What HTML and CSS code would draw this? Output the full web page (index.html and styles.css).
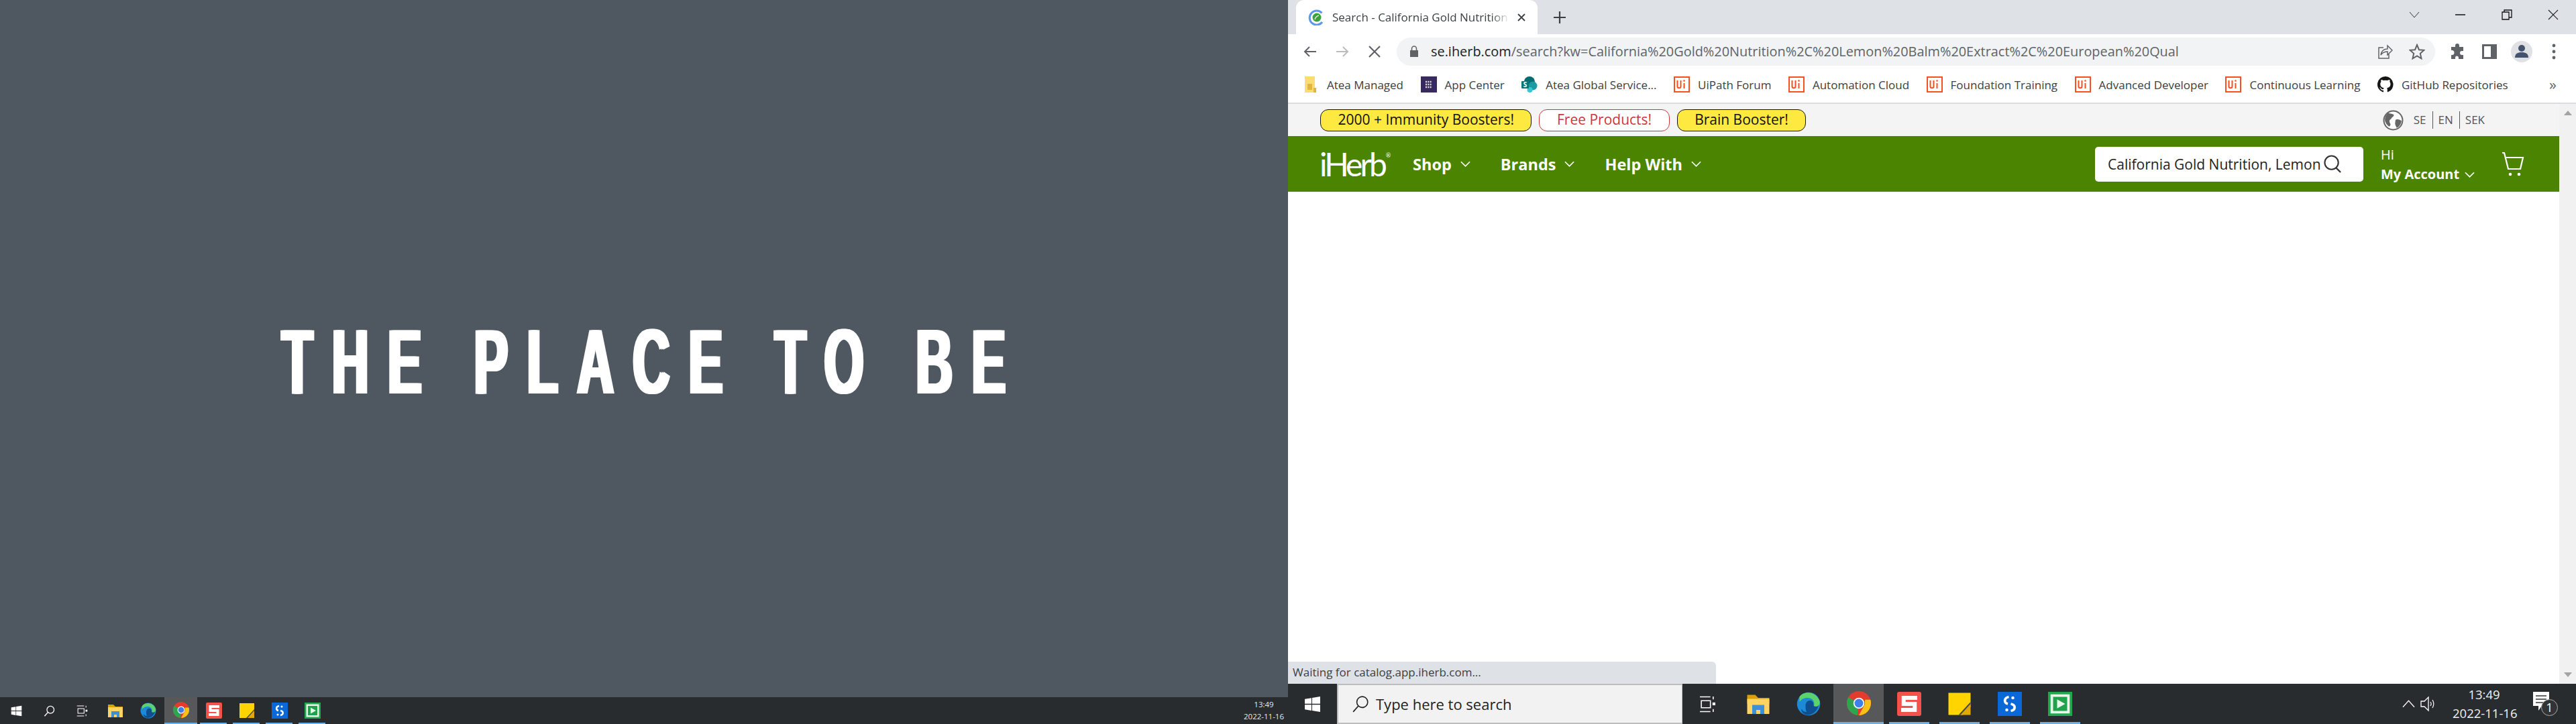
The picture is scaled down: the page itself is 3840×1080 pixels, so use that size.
FILE: index.html
```html
<!DOCTYPE html>
<html lang="en">
<head>
    <meta charset="UTF-8">
    <title>The Place To Be</title>
    <link rel="stylesheet" href="styles.css">
</head>
<body>
    <!-- shared icons -->
    <svg class="sprite" xmlns="http://www.w3.org/2000/svg">
        <symbol id="i-win" viewBox="0 0 24 24"><path fill="#fff" d="M1 4.500 10.500 3v8.300H1zM11.500 2.800 23 1v10.300H11.500zM1 12.700h9.500V21L1 19.500zM11.500 12.700H23V23l-11.500-1.800z"/></symbol>
        <symbol id="i-lens" viewBox="0 0 24 24"><circle cx="14.500" cy="9.500" r="7.500" fill="none" stroke="#fff" stroke-width="1.800"/><path d="M9 15 2 23" stroke="#fff" stroke-width="2" fill="none"/></symbol>
        <symbol id="i-view" viewBox="0 0 24 24"><path fill="none" stroke="#fff" stroke-width="1.500" d="M1 1.500h15M1 22.500h15M3 7h13v10H3zM20 1v4M20 19v4"/><rect x="19" y="9.500" width="4" height="4" fill="#fff"/></symbol>
        <symbol id="i-folder" viewBox="0 0 24 24"><path fill="#d9a000" d="M1 3h8l3 3h11v6H1z"/><path fill="#ffd465" d="M1 7h22v15H1z"/><path fill="#3f8fd6" d="M6 22v-9h12v9h-4v-4h-4v4z"/></symbol>
        <symbol id="i-edge" viewBox="0 0 24 24"><circle cx="12" cy="12" r="11.500" fill="#1c8ad6"/><path fill="#5bd26b" d="M3 5C7-1 19-1 23 9c1 5-3 7-6 6 2-5-1-9-6-9-3 0-6 1-8 4z" /><path fill="#0f4f8f" d="M9 14c0-4 3-6 6-5 2 1 2 3 2 5 2 1 4 1 5-1-1 6-6 10-11 10-3 0-7-3-6-6 1 2 3 3 5 3-1-2-1-4-1-6z"/></symbol>
        <symbol id="i-chrome" viewBox="0 0 24 24"><circle cx="12" cy="12" r="12" fill="#e33b2e"/><path fill="#2fa44f" d="M12 24C5.400 24 0 18.600 0 12c0-2.200.6-4.200 1.600-6L12 12l-1.500 12z"/><path fill="#fbc116" d="M23.500 8.500C24 10 24 11 24 12c0 6.600-5.400 12-12 12l6-11V8.500z"/><circle cx="12" cy="12" r="5.500" fill="#fff"/><circle cx="12" cy="12" r="4.300" fill="#3f7fe8"/></symbol>
        <symbol id="i-snag" viewBox="0 0 24 24"><rect width="24" height="24" rx="2" fill="#f4524d"/><path fill="none" stroke="#fff" stroke-width="4" d="M20 6H6.500v6h11v6H4"/></symbol>
        <symbol id="i-sticky" viewBox="0 0 24 24"><path fill="#ffd400" d="M1 1h22v14l-8 8H1z"/><path fill="#4a4a44" d="M23 10v4l-9 9h-3z"/><path fill="#e2a900" d="M23 12v11H13z"/></symbol>
        <symbol id="i-blue" viewBox="0 0 24 24"><rect width="24" height="24" fill="#0a68d8"/><path fill="none" stroke="#fff" stroke-width="2.500" d="M11 5C6 6 6 11 10 12M13 12c5 1 5 6 0 7"/><circle cx="15" cy="6" r="1.500" fill="#fff"/><circle cx="9" cy="18" r="1.500" fill="#fff"/></symbol>
        <symbol id="i-green" viewBox="0 0 24 24"><rect width="24" height="24" fill="#21a84f"/><rect x="2.500" y="2.500" width="19" height="19" fill="#e8f6ec"/><rect x="5" y="5" width="14" height="14" fill="#1fa24b"/><path fill="#e8f6ec" d="M9 7.500 17 12l-8 4.500z"/></symbol>
        <symbol id="i-ui" viewBox="0 0 24 24"><rect x="1" y="1" width="22" height="22" fill="#fff" stroke="#f4511e" stroke-width="2"/><path fill="none" stroke="#f4511e" stroke-width="2" d="M5.500 6v9c0 3 5 3 5 0V6M15.500 10v8"/><circle cx="15.500" cy="6.500" r="1.300" fill="#f4511e"/></symbol>
    </svg>

    <div class="screen screen-left">
        <div class="wallpaper">
            <h1 class="slogan"><span>THE PLACE TO BE</span></h1>
        </div>
        <div class="taskbar taskbar-small">
            <div class="task"><svg class="ico-t"><use href="#i-win"/></svg></div>
            <div class="task"><svg class="ico-t"><use href="#i-lens"/></svg></div>
            <div class="task"><svg class="ico-t"><use href="#i-view"/></svg></div>
            <div class="task"><svg class="ico-s"><use href="#i-folder"/></svg></div>
            <div class="task"><svg class="ico-s"><use href="#i-edge"/></svg></div>
            <div class="task task-active"><svg class="ico-s"><use href="#i-chrome"/></svg></div>
            <div class="task task-open"><svg class="ico-s"><use href="#i-snag"/></svg></div>
            <div class="task task-open"><svg class="ico-s"><use href="#i-sticky"/></svg></div>
            <div class="task task-open"><svg class="ico-s"><use href="#i-blue"/></svg></div>
            <div class="task task-open"><svg class="ico-s"><use href="#i-green"/></svg></div>
            <div class="clock-small">
                <div>13:49</div>
                <div>2022-11-16</div>
            </div>
        </div>
    </div>

    <div class="screen screen-right">
        <div class="browser">
            <div class="tabstrip">
                <div class="tab">
                    <svg class="favicon" viewBox="0 0 24 24"><path d="M20.500 5.500A10.500 10.500 0 1 0 21 19" fill="none" stroke="#5b97ec" stroke-width="3"/><circle cx="13" cy="12" r="6.500" fill="#3ea23a"/><path d="M10 15c1-4 3-5 6-6" stroke="#fff" stroke-width="1.300" fill="none"/></svg>
                    <span class="tab-title">Search - California Gold Nutrition</span>
                    <svg class="tab-x" viewBox="0 0 12 12"><path d="M1 1l10 10M11 1 1 11" stroke="#3c4043" stroke-width="1.800"/></svg>
                </div>
                <svg class="newtab" viewBox="0 0 18 18"><path d="M9 0v18M0 9h18" stroke="#3c4043" stroke-width="2.200"/></svg>
                <div class="winctl">
                    <div class="winbtn"><svg viewBox="0 0 16 10" width="16" height="10"><path d="M1 1l7 8 7-8" fill="none" stroke="#333" stroke-width="1"/></svg></div>
                    <div class="winbtn"><svg viewBox="0 0 16 16" width="16" height="16"><path d="M0 8h15" stroke="#111" stroke-width="1.500"/></svg></div>
                    <div class="winbtn"><svg viewBox="0 0 16 16" width="16" height="16"><path d="M1 4h10v11H1zM4 4V1h11v11h-4" fill="none" stroke="#111" stroke-width="1.300"/></svg></div>
                    <div class="winbtn"><svg viewBox="0 0 16 16" width="16" height="16"><path d="M1 1l14 14M15 1 1 15" stroke="#222" stroke-width="1.200"/></svg></div>
                </div>
            </div>

            <div class="toolbar">
                <div class="toolbtn"><svg viewBox="0 0 20 20" width="20" height="20"><path d="M19 10H2M9 3 2 10l7 7" fill="none" stroke="#5f6368" stroke-width="2"/></svg></div>
                <div class="toolbtn"><svg viewBox="0 0 20 20" width="20" height="20"><path d="M1 10h17M11 3l7 7-7 7" fill="none" stroke="#b9bcc0" stroke-width="2"/></svg></div>
                <div class="toolbtn"><svg viewBox="0 0 18 18" width="18" height="18"><path d="M1 1l16 16M17 1 1 17" stroke="#5f6368" stroke-width="2.200"/></svg></div>
                <div class="omnibox">
                    <svg class="lock" viewBox="0 0 14 18"><path d="M1 7h12v10H1z" fill="#5f6368"/><path d="M3.500 7V4.500a3.500 3.500 0 0 1 7 0V7" fill="none" stroke="#5f6368" stroke-width="1.600"/></svg>
                    <div class="url"><span class="url-host">se.iherb.com</span>/search?kw=California%20Gold%20Nutrition%2C%20Lemon%20Balm%20Extract%2C%20European%20Qual</div>
                    <div class="toolbtn"><svg viewBox="0 0 24 24" width="24" height="24"><path d="M10 6H3v16h15v-6M6 17c1-6 5-9 10-9V3l7 7-7 7v-5c-4 0-7 1-10 5z" fill="none" stroke="#5f6368" stroke-width="1.500"/></svg></div>
                    <div class="toolbtn"><svg viewBox="0 0 24 24" width="24" height="24"><path d="m12 2 3 7.200 7.500.6-5.700 5 1.700 7.500L12 18.300l-6.500 4 1.700-7.500-5.700-5L9 9.200z" fill="none" stroke="#5f6368" stroke-width="2"/></svg></div>
                </div>
                <div class="toolright">
                    <div class="toolbtn"><svg viewBox="0 0 24 24" width="24" height="24"><path fill="#5f6368" d="M9 3a3 3 0 0 1 6 0v2h6v6h-2a3 3 0 0 0 0 6h2v6h-7v-2a2.500 2.500 0 0 0-5 0v2H3v-6h1a3.500 3.500 0 0 0 0-7H3V5h6z"/></svg></div>
                    <div class="toolbtn"><svg viewBox="0 0 22 22" width="22" height="22"><path fill="#5f6368" fill-rule="evenodd" d="M0 0h22v22H0zM3 3v16h10V3z"/></svg></div>
                    <div class="toolbtn"><svg viewBox="0 0 32 32" width="32" height="32"><circle cx="16" cy="16" r="16" fill="#dfe1e5"/><circle cx="16" cy="11" r="5" fill="#44546f"/><path d="M6 25c0-6 4-8 10-8s10 2 10 8z" fill="#44546f"/></svg></div>
                    <div class="toolbtn"><svg viewBox="0 0 6 24" width="6" height="24"><circle cx="3" cy="3" r="2.400" fill="#5f6368"/><circle cx="3" cy="12" r="2.400" fill="#5f6368"/><circle cx="3" cy="21" r="2.400" fill="#5f6368"/></svg></div>
                </div>
            </div>

            <div class="bookmarks">
                <div class="bm"><svg class="bm-ico" viewBox="0 0 24 24"><path d="M3 0h15v24H3z" fill="#fbdb73"/><path d="M7 11h7v9H7z" fill="#e0b73c"/><path d="M16 17h4v7h-4z" fill="#e0b73c"/></svg>Atea Managed</div>
                <div class="bm"><svg class="bm-ico" viewBox="0 0 24 24"><rect width="24" height="24" fill="#38295f"/><path d="M7 8h10M7 12h10M7 16h10" stroke="#ddd" stroke-width="2.500" stroke-dasharray="2 1.300"/></svg>App Center</div>
                <div class="bm"><svg class="bm-ico" viewBox="0 0 24 24"><circle cx="12" cy="8" r="8" fill="#036c70"/><circle cx="17" cy="14" r="6.500" fill="#1a9ba1"/><circle cx="12.500" cy="20" r="4" fill="#37c6d0"/><rect y="7" width="11" height="11" rx="1" fill="#03787c"/><text x="5.500" y="16" class="sp-s">S</text></svg>Atea Global Service...</div>
                <div class="bm"><svg class="bm-ico"><use href="#i-ui"/></svg>UiPath Forum</div>
                <div class="bm"><svg class="bm-ico"><use href="#i-ui"/></svg>Automation Cloud</div>
                <div class="bm"><svg class="bm-ico"><use href="#i-ui"/></svg>Foundation Training</div>
                <div class="bm"><svg class="bm-ico"><use href="#i-ui"/></svg>Advanced Developer</div>
                <div class="bm"><svg class="bm-ico"><use href="#i-ui"/></svg>Continuous Learning</div>
                <div class="bm"><svg class="bm-ico" viewBox="0 0 24 24"><path fill="#161614" d="M12 0a12 12 0 0 0-3.800 23.400c.6.100.8-.3.800-.6v-2.100c-3.300.7-4-1.600-4-1.600-.6-1.400-1.400-1.800-1.400-1.800-1.100-.7.100-.7.100-.7 1.200.1 1.800 1.200 1.800 1.200 1.100 1.800 2.800 1.300 3.500 1 .1-.8.400-1.300.8-1.600-2.700-.3-5.500-1.300-5.500-5.900 0-1.300.5-2.400 1.200-3.200-.1-.3-.5-1.500.1-3.200 0 0 1-.3 3.300 1.200a11.500 11.500 0 0 1 6 0c2.300-1.500 3.300-1.200 3.300-1.200.6 1.700.2 2.900.1 3.200.8.800 1.200 1.900 1.200 3.200 0 4.600-2.800 5.600-5.500 5.900.4.400.8 1.100.8 2.200v3.300c0 .3.200.7.800.6A12 12 0 0 0 12 0z"/></svg>GitHub Repositories</div>
                <div class="bm-more">»</div>
            </div>

            <div class="page">
                <div class="page-main">
                    <div class="promo">
                        <div class="pill">2000 + Immunity Boosters!</div>
                        <div class="pill pill-white">Free Products!</div>
                        <div class="pill">Brain Booster!</div>
                        <div class="locale">
                            <svg class="globe" viewBox="0 0 30 30"><circle cx="15" cy="15" r="13.500" fill="#fff" stroke="#666" stroke-width="2"/><path fill="#666" d="M8 4c3 2 6 1 8 3 0 3-3 3-4 6-3 1-3 4-1 7 0 2 0 3-2 4-3-2-6-6-6-10 0-4 2-8 5-10zM19 14c3-1 6 0 8 2-1 5-4 9-7 10-1-3-3-5-2-8 0-2 0-3 1-4z"/></svg>
                            <span class="loc">SE</span><span class="loc loc-sep">EN</span><span class="loc loc-sep">SEK</span>
                        </div>
                    </div>
                    <div class="site-head">
                        <div class="logo">iHerb<sup>®</sup></div>
                        <div class="nav">
                            <div class="nav-item">Shop<svg class="chev" viewBox="0 0 16 10"><path d="M1 1l7 7 7-7" fill="none" stroke="#fff" stroke-width="1.800"/></svg></div>
                            <div class="nav-item">Brands<svg class="chev" viewBox="0 0 16 10"><path d="M1 1l7 7 7-7" fill="none" stroke="#fff" stroke-width="1.800"/></svg></div>
                            <div class="nav-item">Help With<svg class="chev" viewBox="0 0 16 10"><path d="M1 1l7 7 7-7" fill="none" stroke="#fff" stroke-width="1.800"/></svg></div>
                        </div>
                        <div class="search">
                            <div class="search-text">California Gold Nutrition, Lemon</div>
                            <svg class="search-ico" viewBox="0 0 28 28"><circle cx="12" cy="12" r="10.500" fill="none" stroke="#333" stroke-width="2.200"/><path d="M19 20l7 7" stroke="#333" stroke-width="2.400"/></svg>
                        </div>
                        <div class="account">
                            <div>Hi</div>
                            <div class="account-name">My Account<svg class="chev chev-acc" viewBox="0 0 16 10"><path d="M1 1l7 7 7-7" fill="none" stroke="#fff" stroke-width="1.800"/></svg></div>
                        </div>
                        <svg class="cart" viewBox="0 0 34 36"><path d="M1 1h3l6 24h18l4-17H7" fill="none" stroke="#fff" stroke-width="2.200"/><circle cx="13" cy="33" r="2.300" fill="#fff"/><circle cx="26" cy="33" r="2.300" fill="#fff"/></svg>
                    </div>
                    <div class="content"></div>
                    <div class="status">Waiting for catalog.app.iherb.com...</div>
                </div>
                <div class="scrollbar">
                    <div class="arrow-up"></div>
                    <div class="arrow-down"></div>
                </div>
            </div>
        </div>

        <div class="taskbar taskbar-big">
            <div class="start"><svg class="ico-win"><use href="#i-win"/></svg></div>
            <div class="winsearch">
                <svg class="ico-lens" viewBox="0 0 24 24"><circle cx="14.500" cy="9.500" r="7.500" fill="none" stroke="#222" stroke-width="1.500"/><path d="M9 15 2 23" stroke="#222" stroke-width="1.600" fill="none"/></svg>
                <span>Type here to search</span>
            </div>
            <div class="task-b"><svg class="ico-view"><use href="#i-view"/></svg></div>
            <div class="task-b"><svg class="ico-b"><use href="#i-folder"/></svg></div>
            <div class="task-b"><svg class="ico-b"><use href="#i-edge"/></svg></div>
            <div class="task-b task-active"><svg class="ico-b"><use href="#i-chrome"/></svg></div>
            <div class="task-b task-open"><svg class="ico-b"><use href="#i-snag"/></svg></div>
            <div class="task-b task-open"><svg class="ico-b"><use href="#i-sticky"/></svg></div>
            <div class="task-b task-open"><svg class="ico-b"><use href="#i-blue"/></svg></div>
            <div class="task-b task-open"><svg class="ico-b"><use href="#i-green"/></svg></div>
            <div class="tray">
                <svg class="tray-chev" viewBox="0 0 20 12"><path d="M1 11 10 1l9 10" fill="none" stroke="#fff" stroke-width="1.300"/></svg>
                <svg class="tray-vol" viewBox="0 0 24 24"><path d="M1 8h5l6-6v20l-6-6H1z" fill="none" stroke="#fff" stroke-width="1.300"/><path d="M15 9c1.500 2 1.500 4 0 6M18 6c2.500 4 2.500 8 0 12" fill="none" stroke="#fff" stroke-width="1.200"/></svg>
                <div class="clock-big">
                    <div>13:49</div>
                    <div>2022-11-16</div>
                </div>
                <div class="notif">
                    <svg class="notif-ico" viewBox="0 0 24 30"><path d="M0 0h24v21H13l-5 7v-7H0z" fill="#fff"/><path d="M4 6h16M4 11h16M4 16h11" stroke="#333" stroke-width="1.400"/></svg>
                    <div class="notif-badge">1</div>
                </div>
            </div>
        </div>
    </div>
</body>
</html>
```

FILE: styles.css
```css
html, body {
    margin: 0;
    padding: 0;
}
body {
    display: flex;
    width: 3840px;
    height: 1080px;
    overflow: hidden;
    font-family: "Open Sans", sans-serif;
    background: #fff;
}
.sprite {
    display: none;
}
.screen {
    width: 1920px;
    height: 1080px;
    display: flex;
    flex-direction: column;
}

/* left screen */
.wallpaper {
    flex: 1;
    background: #4f5860;
    display: flex;
    padding-top: 471px;
    padding-left: 420px;
    box-sizing: border-box;
}
.slogan {
    margin: 0;
    font-family: "Liberation Sans", sans-serif;
    font-weight: 700;
    font-size: 137px;
    line-height: 137px;
    color: #fff;
    white-space: nowrap;
}
.slogan span {
    display: inline-block;
    letter-spacing: 51px;
    transform: scaleX(0.555);
    transform-origin: 0 0;
    text-shadow: 5px 0 #fff, -5px 0 #fff;
}
.taskbar {
    background: #282c2f;
    display: flex;
    align-items: stretch;
    flex: none;
    color: #fff;
}
.taskbar-small {
    height: 40px;
}
.task {
    width: 49px;
    display: flex;
    align-items: center;
    justify-content: center;
    box-sizing: border-box;
}
.ico-s {
    width: 24px;
    height: 24px;
}
.ico-t {
    width: 17px;
    height: 17px;
}
.task-active {
    background: #565859;
    border-bottom: 2px solid #6cb0e8;
}
.task-open {
    position: relative;
}
.task-open::after {
    content: "";
    position: absolute;
    left: 4px;
    right: 5px;
    bottom: 0;
    height: 2px;
    background: #6cb0e8;
}
.clock-small {
    margin-left: auto;
    padding-right: 6px;
    font-size: 11.500px;
    line-height: 18px;
    text-align: center;
    align-self: center;
    color: #e8e8e8;
}

/* browser */
.browser {
    flex: 1;
    display: flex;
    flex-direction: column;
    min-height: 0;
}
.tabstrip {
    height: 51px;
    flex: none;
    background: #dee1e6;
    display: flex;
    align-items: center;
    padding-left: 12px;
}
.tab {
    width: 360px;
    height: 51px;
    box-sizing: border-box;
    background: #fff;
    border-radius: 12px 12px 0 0;
    display: flex;
    align-items: center;
    padding-left: 18px;
    font-size: 17px;
    color: #3c4043;
}
.favicon {
    width: 24px;
    height: 24px;
    flex: none;
}
.tab-title {
    margin-left: 12px;
    width: 264px;
    white-space: nowrap;
    -webkit-mask-image: linear-gradient(90deg, #000 90%, transparent);
    mask-image: linear-gradient(90deg, #000 90%, transparent);
}
.tab-x {
    width: 12px;
    height: 12px;
    margin-left: 12px;
}
.newtab {
    width: 18px;
    height: 18px;
    margin-left: 24px;
}
.winctl {
    margin-left: auto;
    display: flex;
    height: 51px;
}
.winbtn {
    width: 69px;
    display: flex;
    align-items: center;
    justify-content: center;
    padding-bottom: 8px;
    box-sizing: border-box;
}
.toolbar {
    height: 51px;
    flex: none;
    display: flex;
    align-items: center;
    padding-left: 9px;
    padding-right: 9px;
    background: #fff;
}
.toolbtn {
    width: 48px;
    height: 42px;
    flex: none;
    display: flex;
    align-items: center;
    justify-content: center;
}
.omnibox {
    flex: 1;
    height: 42px;
    margin-left: 9px;
    border-radius: 21px;
    background: #f1f3f4;
    display: flex;
    align-items: center;
    padding-left: 19px;
    padding-right: 3px;
}
.lock {
    width: 14px;
    height: 18px;
    flex: none;
}
.url {
    flex: 1;
    margin-left: 18px;
    font-size: 19.900px;
    color: #5f6368;
    white-space: nowrap;
}
.url-host {
    color: #202124;
}
.toolright {
    display: flex;
    margin-left: 9px;
}
.bookmarks {
    height: 48px;
    padding-bottom: 3px;
    flex: none;
    display: flex;
    align-items: center;
    padding-left: 22px;
    gap: 25.500px;
    position: relative;
    font-size: 17px;
    color: #3c4043;
    background: #fff;
}
.bm {
    display: flex;
    align-items: center;
    gap: 12px;
    white-space: nowrap;
}
.bm-ico {
    width: 24px;
    height: 24px;
    flex: none;
}
.sp-s {
    font-family: "Open Sans", sans-serif;
    font-size: 10px;
    font-weight: 700;
    fill: #fff;
    text-anchor: middle;
}
.bm-more {
    position: absolute;
    left: 1880px;
    top: 8px;
    font-size: 22px;
    color: #5f6368;
}
.page {
    flex: 1;
    display: flex;
    border-top: 2px solid #dadce0;
    min-height: 0;
}
.page-main {
    flex: 1;
    display: flex;
    flex-direction: column;
    position: relative;
}
.promo {
    height: 48px;
    flex: none;
    box-sizing: border-box;
    background: #f4f4f4;
    display: flex;
    align-items: center;
    padding-left: 48px;
    gap: 11px;
}
.pill {
    height: 33px;
    box-sizing: border-box;
    padding: 0 25.500px;
    border: 1.500px solid #111;
    border-radius: 12px;
    background: #fde93f;
    font-size: 21px;
    line-height: 29px;
    color: #111;
    white-space: nowrap;
}
.pill-white {
    background: #fff;
    border-color: #c8383c;
    color: #c8383c;
}
.locale {
    margin-left: auto;
    padding-right: 111px;
    display: flex;
    align-items: center;
    font-size: 17px;
    color: #555;
}
.globe {
    width: 31px;
    height: 31px;
    margin-right: 15px;
}
.loc-sep {
    border-left: 1px solid #555;
    margin-left: 9px;
    padding-left: 8px;
}
.loc {
    line-height: 26px;
}
.site-head {
    height: 83px;
    flex: none;
    background: #4a8400;
    display: flex;
    align-items: center;
    padding-left: 47px;
    padding-right: 52px;
    color: #fff;
}
.logo {
    width: 102px;
    font-family: "Lato", sans-serif;
    font-size: 48px;
    letter-spacing: -4px;
    line-height: 50px;
    white-space: nowrap;
}
.logo sup {
    font-size: 9px;
    letter-spacing: 0;
    vertical-align: 28px;
    line-height: 0;
    margin-left: 2px;
}
.nav {
    display: flex;
    margin-left: 37px;
    gap: 45px;
    font-size: 23.500px;
    font-weight: 700;
}
.nav-item {
    display: flex;
    align-items: center;
    gap: 13px;
    white-space: nowrap;
}
.chev {
    width: 15px;
    height: 10px;
    flex: none;
}
.search {
    margin-left: auto;
    width: 400px;
    height: 52px;
    box-sizing: border-box;
    background: #fff;
    border-radius: 5px;
    display: flex;
    align-items: center;
    padding-left: 19px;
    gap: 4px;
}
.search-text {
    white-space: nowrap;
    color: #222;
    font-size: 21px;
}
.search-ico {
    width: 27px;
    height: 27px;
    flex: none;
}
.account {
    margin-left: 26px;
    font-size: 20px;
    line-height: 29px;
    width: 180px;
}
.account-name {
    font-weight: 700;
    display: flex;
    align-items: center;
    gap: 8px;
}
.chev-acc {
    margin-top: 3px;
}
.cart {
    width: 34px;
    height: 36px;
    flex: none;
}
.content {
    flex: 1;
    background: #fff;
}
.status {
    position: absolute;
    left: 0;
    bottom: 0;
    width: 638px;
    height: 33px;
    box-sizing: border-box;
    padding-left: 7px;
    background: #dee1e6;
    border-radius: 0 6px 0 0;
    font-size: 17px;
    line-height: 32px;
    color: #3c4043;
    white-space: nowrap;
}
.scrollbar {
    width: 25px;
    background: #f1f1f1;
    display: flex;
    flex-direction: column;
    justify-content: space-between;
    align-items: center;
    padding: 10px 0;
    box-sizing: border-box;
}
.arrow-up {
    border: 6px solid transparent;
    border-top: 0;
    border-bottom: 7px solid #a3a3a3;
}
.arrow-down {
    border: 6px solid transparent;
    border-bottom: 0;
    border-top: 7px solid #a3a3a3;
}

/* big taskbar */
.taskbar-big {
    height: 60px;
}
.start {
    width: 73px;
    display: flex;
    align-items: center;
    justify-content: center;
}
.ico-win {
    width: 25px;
    height: 25px;
}
.winsearch {
    width: 515px;
    box-sizing: border-box;
    background: #f2f2f2;
    border: 2px solid #bdbdbd;
    border-right-width: 1px;
    display: flex;
    align-items: center;
    padding-left: 20px;
    gap: 10px;
    font-size: 22px;
    color: #222;
}
.ico-lens {
    width: 26px;
    height: 26px;
}
.task-b {
    width: 75px;
    display: flex;
    align-items: center;
    justify-content: center;
    box-sizing: border-box;
    position: relative;
}
.ico-b {
    width: 36px;
    height: 36px;
}
.ico-view {
    width: 25px;
    height: 25px;
}
.taskbar-big .task-active {
    border-bottom: 3px solid #6cb0e8;
}
.task-b.task-open::after {
    left: 8px;
    right: 7px;
    height: 3px;
}
.tray {
    margin-left: auto;
    display: flex;
    align-items: center;
    padding-right: 27px;
}
.tray-chev {
    width: 19px;
    height: 12px;
    margin-right: 8px;
}
.tray-vol {
    width: 24px;
    height: 26px;
    margin-right: 24px;
}
.clock-big {
    width: 94px;
    text-align: center;
    font-size: 18.500px;
    line-height: 28px;
    color: #f0f0f0;
    white-space: nowrap;
}
.notif {
    position: relative;
    width: 40px;
    height: 48px;
    margin-left: 23px;
}
.notif-ico {
    position: absolute;
    left: 3px;
    top: 6px;
    width: 24px;
    height: 30px;
}
.notif-badge {
    position: absolute;
    left: 15px;
    top: 17px;
    width: 23px;
    height: 23px;
    border-radius: 50%;
    border: 1px solid #aaa;
    background: #333;
    font-size: 18px;
    line-height: 23px;
    text-align: center;
    color: #fff;
}
```
